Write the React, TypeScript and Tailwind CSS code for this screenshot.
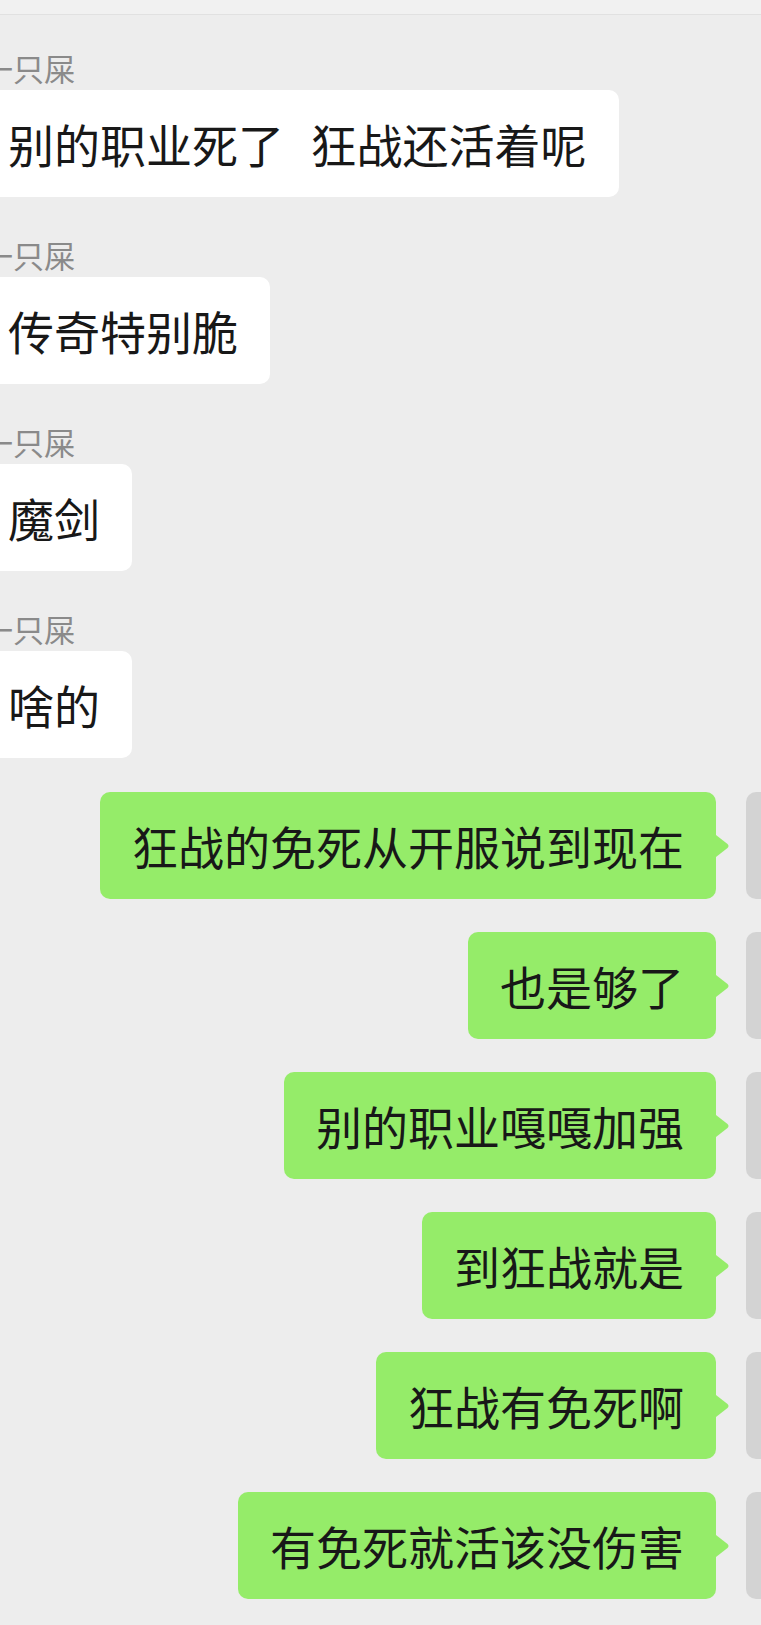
import React from "react";

const incoming = ["别的职业死了  狂战还活着呢", "传奇特别脆", "魔剑", "啥的"];

const outgoing = [
    "狂战的免死从开服说到现在",
    "也是够了",
    "别的职业嘎嘎加强",
    "到狂战就是",
    "狂战有免死啊",
    "有免死就活该没伤害",
];

const font = { fontFamily: '"Noto Sans CJK SC", "Noto Sans", sans-serif' };

const Tail = () => (
    <svg
        className="absolute left-full top-1/2 -translate-y-1/2"
        width="14"
        height="22"
        viewBox="0 0 14 22"
    >
        <path d="M0 0 L11.5 9 Q13.5 11 11.5 13 L0 22 Z" fill="#95ec69" />
    </svg>
);

export default function App() {
    return (
        <div
            className="w-[761px] h-[1625px] overflow-hidden bg-[#ededed] text-[#181818]"
            style={font}
        >
            {/* top strip */}
            <div className="h-[15px] bg-[#f1f1f1] border-b border-[#e1e1e1]" />

            {/* incoming messages, avatar cut off on the left */}
            <div className="flex flex-col items-start">
                {incoming.map((text, i) => (
                    <div key={i} className={i === 0 ? "mt-[37px]" : "mt-[42px]"}>
                        <p className="ml-[-18px] text-[31px] leading-[32px] text-[#8a8a8a]">
                            一只屎
                        </p>
                        <div className="mt-[6px] ml-[-24px] w-fit rounded-[10px] bg-white px-[32px] py-[23px]">
                            <p className="text-[46px] leading-[61px] whitespace-pre [word-spacing:3px]">
                                {text}
                            </p>
                        </div>
                    </div>
                ))}
            </div>

            {/* outgoing messages, avatar cut off on the right */}
            <div className="mt-[34px] flex flex-col gap-[33px]">
                {outgoing.map((text, i) => (
                    <div key={i} className="flex justify-end items-start gap-[30px]">
                        <div className="relative rounded-[10px] bg-[#95ec69] px-[32px] py-[23px]">
                            <p className="text-[46px] leading-[61px] whitespace-pre">{text}</p>
                            <Tail />
                        </div>
                        <div className="shrink-0 w-[107px] h-[107px] mr-[-92px] rounded-[10px] bg-[#d3d3d3]" />
                    </div>
                ))}
            </div>
        </div>
    );
}
